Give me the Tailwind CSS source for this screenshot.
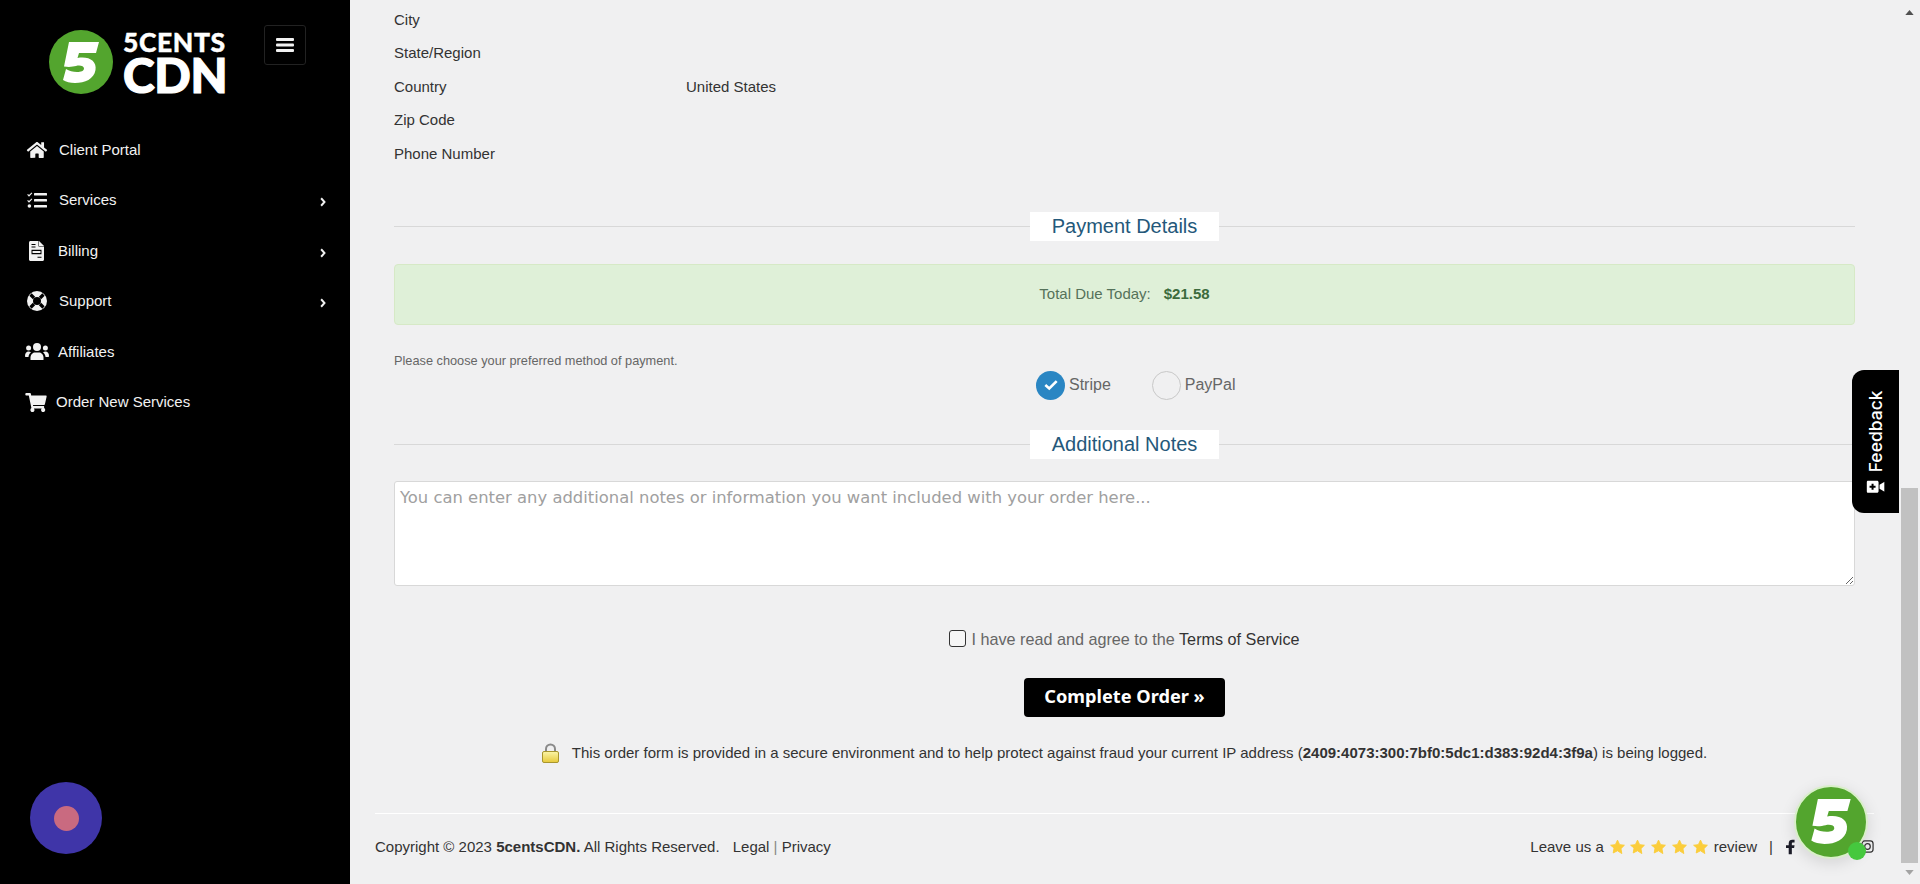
<!DOCTYPE html>
<html lang="en">
<head>
<meta charset="utf-8">
<title>Checkout</title>
<script src="https://cdn.jsdelivr.net/npm/@tailwindcss/browser@4"></script>
</head>
<body class="h-[884px] w-[1920px] overflow-hidden bg-[#f0f0f1] font-['Liberation_Sans',Arial,sans-serif] text-[#333]">
<div class="flex h-[884px] w-[1920px]">
  <aside class="relative flex h-full w-[350px] shrink-0 flex-col bg-black text-[#f2f2f2]">
    <div class="flex h-[124.500px] items-start pl-[49px]">
      <div class="mt-[30px] flex items-center">
        <svg viewBox="0 0 64 64" class="h-16 w-16 shrink-0"><circle cx="32" cy="32" r="32" fill="#53a52e"/><path d="M20 12H50L47 23H30L28.500 28C40 26 48 31 46.500 40C45 49 36 53 26 53C21 53 17 52 14 50L17 39C20 41 24 42 28 42C32 42 35 41 35 38.500C35 36 31 35 27 36C24 36.500 21 37.500 15 36.500Z" fill="#fff"/></svg>
        <div class="ml-[10px] flex w-[103px] flex-col whitespace-nowrap font-['Lato',sans-serif] font-black leading-none text-white">
          <span class="h-[25px] text-[26.500px] leading-[25px] tracking-[0.6px] [-webkit-text-stroke:0.4px_#fff]">5CENTS</span>
          <span class="h-[39px] text-[48px] leading-[39px] tracking-[-0.3px] [-webkit-text-stroke:1.2px_#fff]">CDN</span>
        </div>
      </div>
      <button class="ml-[38px] mt-[25px] flex h-[40px] w-[42px] items-center justify-center rounded-[3px] border border-[#222]">
        <svg viewBox="0 0 18 14" class="h-[14px] w-[18px]" fill="#f2f2f2"><rect y="0" width="18" height="3" rx="1"/><rect y="5.500" width="18" height="3" rx="1"/><rect y="11" width="18" height="3" rx="1"/></svg>
      </button>
    </div>
    <nav class="flex flex-col text-[15px]">
      <a class="flex h-[50.500px] items-center pl-[26px]">
        <svg viewBox="0 0 576 512" class="h-[18px] w-[22px] shrink-0" fill="#f2f2f2"><path d="M280 148 96 300v164c0 9 7 16 16 16l112-.3c9 0 16-7 16-16V368c0-9 7-16 16-16h64c9 0 16 7 16 16v96c0 9 7 16 16 16l112 .3c9 0 16-7 16-16V300L296 148c-5-4-11-4-16 0zM572 251l-84-69V44c0-7-5-12-12-12h-56c-7 0-12 5-12 12v72L318 43c-18-15-43-15-61 0L4 251c-5 4-6 12-2 17l26 31c4 5 12 6 17 2L280 107c4-4 11-4 15 0l235 194c5 4 13 3 17-2l26-31c4-5 3-13-1-17z"/></svg>
        <span class="ml-[11px]">Client Portal</span>
      </a>
      <a class="flex h-[50.500px] items-center pl-[27px]">
        <svg viewBox="0 0 20 16" class="h-[16px] w-[20px] shrink-0" fill="#f2f2f2"><path d="M1 2l1 1 2.500-2.500.8.8L2 4.800 .2 2.800zM1 8l1 1 2.500-2.500.8.8L2 10.800.2 8.800z"/><circle cx="2.400" cy="14" r="1.800"/><rect x="7" y="1" width="13" height="2.500" rx=".5"/><rect x="7" y="7" width="13" height="2.500" rx=".5"/><rect x="7" y="13" width="13" height="2.500" rx=".5"/></svg>
        <span class="ml-[12px]">Services</span>
        <svg viewBox="0 0 8 12" class="ml-auto mr-[24px] mt-[4px] h-[10px] w-[6px]" fill="none" stroke="#f2f2f2" stroke-width="2.600"><path d="M1.500 1l4.500 5-4.500 5"/></svg>
      </a>
      <a class="flex h-[50.500px] items-center pl-[29px]">
        <svg viewBox="0 0 15 20" class="h-[20px] w-[15px] shrink-0"><path d="M0 1.500C0 .7.700 0 1.500 0H9.500L15 5.500V18.500C15 19.300 14.300 20 13.500 20H1.500C.7 20 0 19.300 0 18.500Z" fill="#f2f2f2"/><path d="M9.500 0V5.500H15" fill="#000"/><path d="M10 0l5 5h-5z" fill="#f2f2f2"/><path d="M2.500 3h4v1h-4zM2.500 5.500h4v1h-4zM2.500 8.800h10v4.400h-10zM8.500 15.800h4v1h-4z" fill="#000"/><path d="M3.500 10h8v2h-8z" fill="#f2f2f2"/></svg>
        <span class="ml-[14px]">Billing</span>
        <svg viewBox="0 0 8 12" class="ml-auto mr-[24px] mt-[4px] h-[10px] w-[6px]" fill="none" stroke="#f2f2f2" stroke-width="2.600"><path d="M1.500 1l4.500 5-4.500 5"/></svg>
      </a>
      <a class="flex h-[50.500px] items-center pl-[27px]">
        <svg viewBox="0 0 20 20" class="h-[20px] w-[20px] shrink-0"><circle cx="10" cy="10" r="10" fill="#f2f2f2"/><circle cx="10" cy="10" r="4" fill="#000"/><path d="M3.500 3.500 7 7M16.500 3.500 13 7M3.500 16.500 7 13M16.500 16.500 13 13" stroke="#000" stroke-width="3.200"/></svg>
        <span class="ml-[12px]">Support</span>
        <svg viewBox="0 0 8 12" class="ml-auto mr-[24px] mt-[4px] h-[10px] w-[6px]" fill="none" stroke="#f2f2f2" stroke-width="2.600"><path d="M1.500 1l4.500 5-4.500 5"/></svg>
      </a>
      <a class="flex h-[50.500px] items-center pl-[25px]">
        <svg viewBox="0 0 24 17" class="h-[17px] w-[24px] shrink-0" fill="#f2f2f2"><circle cx="12" cy="4" r="4"/><circle cx="3.600" cy="5" r="2.500"/><circle cx="20.400" cy="5" r="2.500"/><path d="M5.500 17v-2.500C5.500 11.500 8 9.500 10 9.500h4c2 0 4.500 2 4.500 5V17z"/><path d="M0 13C0 10 1.500 8.500 3.500 8.500c1 0 1.800.3 2.500.8-1.500 1.200-2.500 3-2.500 4.700H1c-.6 0-1-.4-1-1zM24 13c0-3-1.500-4.500-3.500-4.500-1 0-1.800.3-2.500.8 1.500 1.200 2.500 3 2.500 4.700H23c.6 0 1-.4 1-1z"/></svg>
        <span class="ml-[9px]">Affiliates</span>
      </a>
      <a class="flex h-[50.500px] items-center pl-[25px]">
        <svg viewBox="0 0 576 512" class="h-[19px] w-[22px] shrink-0" fill="#f2f2f2"><path d="M528 301 575 93c3-15-8-29-23-29H159l-9-47C148 7 139 0 129 0H24C11 0 0 11 0 24v16c0 13 11 24 24 24h70l70 343c-17 10-28 28-28 49 0 31 25 56 56 56s56-25 56-56c0-16-7-30-17-40h210c-11 10-17 24-17 40 0 31 25 56 56 56s56-25 56-56c0-22-13-41-32-50l5-24c3-15-8-29-23-29H212l-7-32h300c11 0 21-8 23-19z"/></svg>
        <span class="ml-[9px]">Order New Services</span>
      </a>
    </nav>
    <div class="absolute bottom-[30px] left-[30px] flex h-[72px] w-[72px] items-center justify-center rounded-full bg-[#3f35a8]">
      <div class="h-[25px] w-[25px] rounded-full bg-[#c96a80]"></div>
    </div>
  </aside>

  <main class="relative flex h-full min-w-0 flex-1 flex-col pl-[25px] pr-[27px]">
    <div class="px-[19px] text-[15px] text-[#333]">
      <dl class="mt-[3px] grid grid-cols-[292px_1fr] auto-rows-[33.500px] items-center">
        <dt>City</dt><dd></dd>
        <dt>State/Region</dt><dd></dd>
        <dt>Country</dt><dd>United States</dd>
        <dt>Zip Code</dt><dd></dd>
        <dt>Phone Number</dt><dd></dd>
      </dl>
      <div class="relative mt-[41px] flex h-[29px] items-center justify-center">
        <div class="absolute inset-x-0 top-[14px] border-t border-[#d8d8d8]"></div>
        <h2 class="relative flex h-[29px] w-[189px] items-center justify-center bg-white text-[20px] text-[#24587a]">Payment Details</h2>
      </div>
      <div class="mt-[23px] flex h-[61px] items-center justify-center rounded-[4px] border border-[#d6e9c6] bg-[#dff0d8] text-[15px]">
        <span class="text-[#55725a]">Total Due Today:</span><strong class="ml-[13px] text-[#3c6b3d]">$21.58</strong>
      </div>
      <p class="mt-[29px] text-[12.750px] leading-[14px] text-[#666]">Please choose your preferred method of payment.</p>
      <div class="ml-[642px] mt-[3px] flex h-[29px] items-center text-[16px] text-[#666]">
        <span class="flex h-[29px] w-[29px] items-center justify-center rounded-full bg-[#2a86c3]">
          <svg viewBox="0 0 16 12" class="h-[12px] w-[14px]" fill="none" stroke="#fff" stroke-width="3"><path d="M1.500 6l4.500 4 8.500-8.500"/></svg>
        </span>
        <span class="ml-[4px]">Stripe</span>
        <span class="ml-[41px] h-[29px] w-[29px] rounded-full border border-[#c8c8c8]"></span>
        <span class="ml-[4px]">PayPal</span>
      </div>
      <div class="relative mt-[30px] flex h-[29px] items-center justify-center">
        <div class="absolute inset-x-0 top-[14px] border-t border-[#d8d8d8]"></div>
        <h2 class="relative flex h-[29px] w-[189px] items-center justify-center bg-white text-[20px] text-[#24587a]">Additional Notes</h2>
      </div>
      <textarea rows="4" class="mt-[22px] block h-[105px] w-full rounded-[3px] border border-[#d8d8d8] bg-white px-[5px] py-[5px] font-['DejaVu_Sans',sans-serif] text-[16.400px] leading-[22px] placeholder:text-[#a0a0a0]" placeholder="You can enter any additional notes or information you want included with your order here..."></textarea>
      <label class="mt-[44px] flex h-[20px] items-center justify-center text-[16.200px] text-[#666]">
        <input type="checkbox" class="mb-[2px] h-[17px] w-[17px] appearance-none rounded-[3px] border border-[#333] bg-white/40">
        <span class="ml-[5px]">I have read and agree to the <a class="text-[#333]">Terms of Service</a></span>
      </label>
      <div class="mt-[28px] flex justify-center">
        <button class="flex h-[39px] w-[201px] items-center justify-center rounded-[4px] bg-black font-['Noto_Sans',sans-serif] text-[18.200px] font-bold text-white">Complete Order »</button>
      </div>
      <div class="mt-[26px] flex h-[22px] items-center justify-center text-[15px] text-[#333]">
        <svg viewBox="0 0 17 20" class="mb-[1px] h-[20px] w-[17px] shrink-0"><defs><linearGradient id="lockBody" x1="0" y1="0" x2="0" y2="1"><stop offset="0" stop-color="#fbf5a8"/><stop offset="1" stop-color="#e6c93a"/></linearGradient></defs><path d="M4 9V6a4.500 4.500 0 0 1 9 0v3" fill="none" stroke="#8a8a8a" stroke-width="2"/><rect x=".5" y="8.500" width="16" height="11" rx="1.500" fill="url(#lockBody)" stroke="#a8962e"/></svg>
        <span class="ml-[13px]">This order form is provided in a secure environment and to help protect against fraud your current IP address (<strong>2409:4073:300:7bf0:5dc1:d383:92d4:3f9a</strong>) is being logged.</span>
      </div>
    </div>
    <footer class="mt-[48px] flex h-[71px] items-start justify-between border-t border-white pt-[24px] text-[15px] leading-[18px] text-[#333]">
      <div>Copyright © 2023 <strong>5centsCDN.</strong> All Rights Reserved. <span class="ml-[9px]">Legal</span> <span class="text-[#888]">|</span> Privacy</div>
      <div class="flex items-center">
        <span>Leave us a</span>
        <span class="ml-[6px] flex gap-[5.750px]">
          <svg viewBox="0 0 24 24" class="h-[16px] w-[15px]" fill="#fbcd3b"><path d="M12 1l3.400 7.200 7.600 1-5.500 5.400 1.400 7.900L12 18l-6.900 3.500 1.400-7.900L1 9.200l7.600-1z" stroke="#fbcd3b" stroke-width="1.500" stroke-linejoin="round"/></svg>
          <svg viewBox="0 0 24 24" class="h-[16px] w-[15px]" fill="#fbcd3b"><path d="M12 1l3.400 7.200 7.600 1-5.500 5.400 1.400 7.900L12 18l-6.900 3.500 1.400-7.900L1 9.200l7.600-1z" stroke="#fbcd3b" stroke-width="1.500" stroke-linejoin="round"/></svg>
          <svg viewBox="0 0 24 24" class="h-[16px] w-[15px]" fill="#fbcd3b"><path d="M12 1l3.400 7.200 7.600 1-5.500 5.400 1.400 7.900L12 18l-6.900 3.500 1.400-7.900L1 9.200l7.600-1z" stroke="#fbcd3b" stroke-width="1.500" stroke-linejoin="round"/></svg>
          <svg viewBox="0 0 24 24" class="h-[16px] w-[15px]" fill="#fbcd3b"><path d="M12 1l3.400 7.200 7.600 1-5.500 5.400 1.400 7.900L12 18l-6.900 3.500 1.400-7.900L1 9.200l7.600-1z" stroke="#fbcd3b" stroke-width="1.500" stroke-linejoin="round"/></svg>
          <svg viewBox="0 0 24 24" class="h-[16px] w-[15px]" fill="#fbcd3b"><path d="M12 1l3.400 7.200 7.600 1-5.500 5.400 1.400 7.900L12 18l-6.900 3.500 1.400-7.900L1 9.200l7.600-1z" stroke="#fbcd3b" stroke-width="1.500" stroke-linejoin="round"/></svg>
        </span>
        <span class="ml-[6px]">review</span>
        <span class="ml-[12px]">|</span>
        <svg viewBox="0 0 10 16" class="ml-[13px] h-[16px] w-[9px]" fill="#1c1c28"><path d="M3 16V9H0V6h3V4c0-3 1.700-4 4-4h2.500v3H8C6.800 3 6.500 3.500 6.500 4.500V6h3l-.5 3H6.500v7z"/></svg>
        <svg viewBox="0 0 14 14" class="ml-[66px] h-[13px] w-[13px]" fill="none" stroke="#333" stroke-width="1.300"><rect x="1" y="1" width="12" height="12" rx="3"/><circle cx="7" cy="7" r="3"/></svg>
      </div>
    </footer>

    <div class="absolute right-[2px] top-[370px] flex h-[143px] w-[47px] items-center justify-center rounded-l-[12px] bg-black pt-[4px]">
      <div class="flex rotate-[-90deg] items-center whitespace-nowrap font-['Inter',sans-serif] text-[17.500px] font-medium text-white">
        <svg viewBox="0 0 18 14" class="mr-[5.500px] h-[14px] w-[18px] rotate-[90deg]" fill="#fff"><path d="M1.500 1h9c.8 0 1.500.7 1.500 1.500v9c0 .8-.7 1.500-1.500 1.500h-9C.7 13 0 12.300 0 11.500v-9C0 1.700.7 1 1.500 1zM13 5l5-3v10l-5-3z"/><path d="M5 4h2v2h2v2H7v2H5V8H3V6h2z" fill="#000"/></svg>
        <span>Feedback</span>
      </div>
    </div>

    <div class="absolute left-[1444px] top-[785px] h-[74px] w-[74px] rounded-full border-2 border-[#d9efc9] bg-[#53a52e] shadow-[0_4px_16px_rgba(0,0,0,0.12)]">
      <svg viewBox="0 1 64 64" class="h-full w-full"><path d="M20 12H50L47 23H30L28.500 28C40 26 48 31 46.500 40C45 49 36 53 26 53C21 53 17 52 14 50L17 39C20 41 24 42 28 42C32 42 35 41 35 38.500C35 36 31 35 27 36C24 36.500 21 37.500 15 36.500Z" fill="#fff"/></svg>
      <span class="absolute left-[52px] top-[55px] h-[18px] w-[18px] rounded-full bg-[#45c83e]"></span>
    </div>
  </main>

  <div class="flex h-full w-[19px] shrink-0 flex-col items-start">
    <svg viewBox="0 0 10 6" class="ml-[4px] mt-[10px] h-[5px] w-[9px] shrink-0" fill="#505050"><path d="M5 0l5 6H0z"/></svg>
    <div class="mt-[473px] h-[375px] w-[17px] shrink-0 bg-[#c1c1c1]"></div>
    <svg viewBox="0 0 10 6" class="ml-[4px] mt-[7px] h-[5px] w-[9px] shrink-0" fill="#a3a3a3"><path d="M0 0h10L5 6z"/></svg>
  </div>
</div>
</body>
</html>
